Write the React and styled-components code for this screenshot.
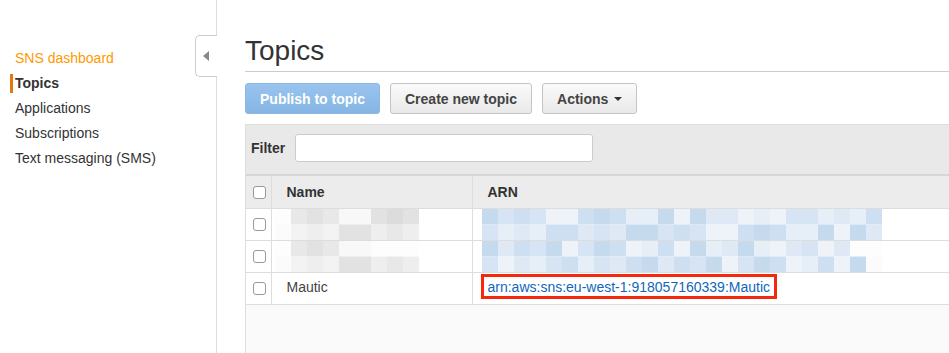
import React from "react";
import styled, { createGlobalStyle } from "styled-components";

const GlobalStyle = createGlobalStyle`
  html, body {
    margin: 0;
    padding: 0;
    background: #fff;
    font-family: "Liberation Sans", Arial, sans-serif;
    font-size: 14px;
    color: #333;
  }
`;

const Page = styled.div`
  display: flex;
  height: 353px;
  overflow: hidden;
`;

const Sidebar = styled.nav`
  position: relative;
  width: 217px;
  flex-shrink: 0;
  border-right: 1px solid #ddd;
  padding-top: 46px;
  box-sizing: border-box;
`;

const CollapseTab = styled.div`
  position: absolute;
  top: 35px;
  right: -1px;
  width: 21px;
  height: 40px;
  background: #fff;
  border: 1px solid #ccc;
  border-right: none;
  border-radius: 5px 0 0 5px;
  display: flex;
  align-items: center;
  justify-content: center;
  &::after {
    content: "";
    border-top: 5px solid transparent;
    border-bottom: 5px solid transparent;
    border-right: 6px solid #888;
    margin-left: -2px;
  }
`;

const NavItem = styled.a`
  display: block;
  height: 25px;
  line-height: 25px;
  padding-left: 15px;
  font-size: 14px;
  text-decoration: none;
  color: ${(p) => (p.$home ? "#f90" : "#333")};
  font-weight: ${(p) => (p.$active ? "bold" : "normal")};
  position: relative;
  &::before {
    content: "";
    display: ${(p) => (p.$active ? "block" : "none")};
    position: absolute;
    left: 10px;
    top: 3px;
    width: 3px;
    height: 19px;
    background: #e47911;
  }
`;

const Main = styled.main`
  flex: 1;
  padding-left: 28px;
  display: flex;
  flex-direction: column;
  min-width: 0;
`;

const Title = styled.h1`
  margin: 0;
  padding-top: 34px;
  height: 37px;
  font-size: 28px;
  line-height: 34px;
  font-weight: normal;
  color: #333;
  border-bottom: 1px solid #ccc;
`;

const Toolbar = styled.div`
  display: flex;
  gap: 10px;
  margin-top: 11px;
`;

const Button = styled.button`
  height: 31px;
  padding: 0 14px;
  font-family: inherit;
  font-size: 14px;
  font-weight: bold;
  border-radius: 3px;
  display: flex;
  align-items: center;
  gap: 6px;
  color: ${(p) => (p.$primary ? "#fff" : "#444")};
  background: ${(p) =>
    p.$primary
      ? "linear-gradient(#98c4ee, #86b5e4)"
      : "linear-gradient(#fafafa, #e9e9e9)"};
  border: 1px solid ${(p) => (p.$primary ? "#8cb8e3" : "#c4c4c4")};
`;

const Caret = styled.span`
  border-left: 4px solid transparent;
  border-right: 4px solid transparent;
  border-top: 4px solid #333;
`;

const Panel = styled.section`
  margin-top: 10px;
  flex: 1;
  border-left: 1px solid #ddd;
  border-top: 1px solid #ddd;
  background: #fafafa;
`;

const FilterBar = styled.div`
  display: flex;
  align-items: center;
  gap: 10px;
  height: 46px;
  padding: 0 0 3px 5px;
  background: #e9e9e9;
  border-bottom: 2px solid #d6d6d6;
`;

const FilterLabel = styled.label`
  font-weight: bold;
  font-size: 14px;
`;

const FilterInput = styled.input`
  width: 298px;
  height: 28px;
  box-sizing: border-box;
  border: 1px solid #ccc;
  border-radius: 3px;
  background: #fff;
`;

const Table = styled.table`
  width: 100%;
  border-collapse: collapse;
  table-layout: fixed;
`;

const Th = styled.th`
  height: 32px;
  padding: 0 0 0 ${(p) => p.$pad ?? 15}px;
  text-align: left;
  font-size: 14px;
  font-weight: bold;
  background: #ececec;
  border-left: 1px solid #ddd;
  border-bottom: 1px solid #ddd;
  &:first-child { border-left: none; }
`;

const Td = styled.td`
  height: ${(p) => (p.$lift ? 27 : 31)}px;
  padding: 0 0 ${(p) => (p.$lift ? 4 : 0)}px ${(p) => p.$pad ?? 15}px;
  background: #fff;
  border-left: 1px solid #ddd;
  border-bottom: 1px solid #ddd;
  font-size: 14px;
  color: #444;
  overflow: hidden;
  white-space: nowrap;
  &:first-child { border-left: none; }
`;

const Check = styled.span`
  display: block;
  width: 11px;
  height: 11px;
  border: 1px solid #999;
  border-radius: 3px;
  background: #fff;
`;

const ArnLink = styled.a`
  display: inline-block;
  vertical-align: middle;
  margin-left: -7px;
  padding: 1px 4px 0;
  border: 3px solid #f5280f;
  color: #1166bb;
  text-decoration: none;
  line-height: 18px;
`;

const NAME_SHADES = ["#dcdcdc", "#e2e2e2", "#e8e8e8", "#eeeeee", "#f3f3f3", "#f8f8f8"];
const ARN_SHADES = ["#c6daee", "#cedff1", "#d6e4f3", "#dee9f5", "#e6eef8", "#eef3fa"];

const Mosaic = ({ cols, fade, shades, seed, lead = 0 }) => {
  const rects = [];
  for (let r = 0; r < 2; r++) {
    for (let c = 0; c < cols; c++) {
      const n = (c * 7 + r * 13 + seed * 5 + ((c * c + seed) % 5)) % shades.length;
      const light = c >= fade[r] || c < lead;
      rects.push(
        <rect
          key={r + "-" + c}
          x={c * 16}
          y={r * 16}
          width={16}
          height={16}
          fill={light ? (r ? "#fbfbfb" : "#fdfdfd") : shades[(n + r) % shades.length]}
        />
      );
    }
  }
  return (
    <svg
      width={cols * 16}
      height={31}
      viewBox={`0 0 ${cols * 16} 32`}
      preserveAspectRatio="none"
      style={{ display: "block", marginLeft: -12 }}
    >
      {rects}
    </svg>
  );
};

const App = () => (
  <>
    <GlobalStyle />
    <Page>
      <Sidebar>
        <NavItem $home>SNS dashboard</NavItem>
        <NavItem $active>Topics</NavItem>
        <NavItem>Applications</NavItem>
        <NavItem>Subscriptions</NavItem>
        <NavItem>Text messaging (SMS)</NavItem>
        <CollapseTab />
      </Sidebar>
      <Main>
        <Title>Topics</Title>
        <Toolbar>
          <Button $primary>Publish to topic</Button>
          <Button>Create new topic</Button>
          <Button>
            Actions <Caret />
          </Button>
        </Toolbar>
        <Panel>
          <FilterBar>
            <FilterLabel>Filter</FilterLabel>
            <FilterInput />
          </FilterBar>
          <Table>
            <colgroup>
              <col style={{ width: 25 }} />
              <col style={{ width: 201 }} />
              <col />
            </colgroup>
            <thead>
              <tr>
                <Th $pad={7}><Check /></Th>
                <Th>Name</Th>
                <Th>ARN</Th>
              </tr>
            </thead>
            <tbody>
              <tr>
                <Td $pad={7}><Check /></Td>
                <Td><Mosaic cols={9} fade={[9, 9]} shades={NAME_SHADES} seed={1} lead={1} /></Td>
                <Td $pad={21}><Mosaic cols={25} fade={[25, 25]} shades={ARN_SHADES} seed={2} /></Td>
              </tr>
              <tr>
                <Td $pad={7}><Check /></Td>
                <Td><Mosaic cols={9} fade={[6, 9]} shades={NAME_SHADES} seed={3} lead={1} /></Td>
                <Td $pad={21}><Mosaic cols={25} fade={[23, 24]} shades={ARN_SHADES} seed={4} /></Td>
              </tr>
              <tr>
                <Td $pad={7}><Check /></Td>
                <Td $lift>Mautic</Td>
                <Td $lift>
                  <ArnLink href="#">arn:aws:sns:eu-west-1:918057160339:Mautic</ArnLink>
                </Td>
              </tr>
            </tbody>
          </Table>
        </Panel>
      </Main>
    </Page>
  </>
);

export default App;
